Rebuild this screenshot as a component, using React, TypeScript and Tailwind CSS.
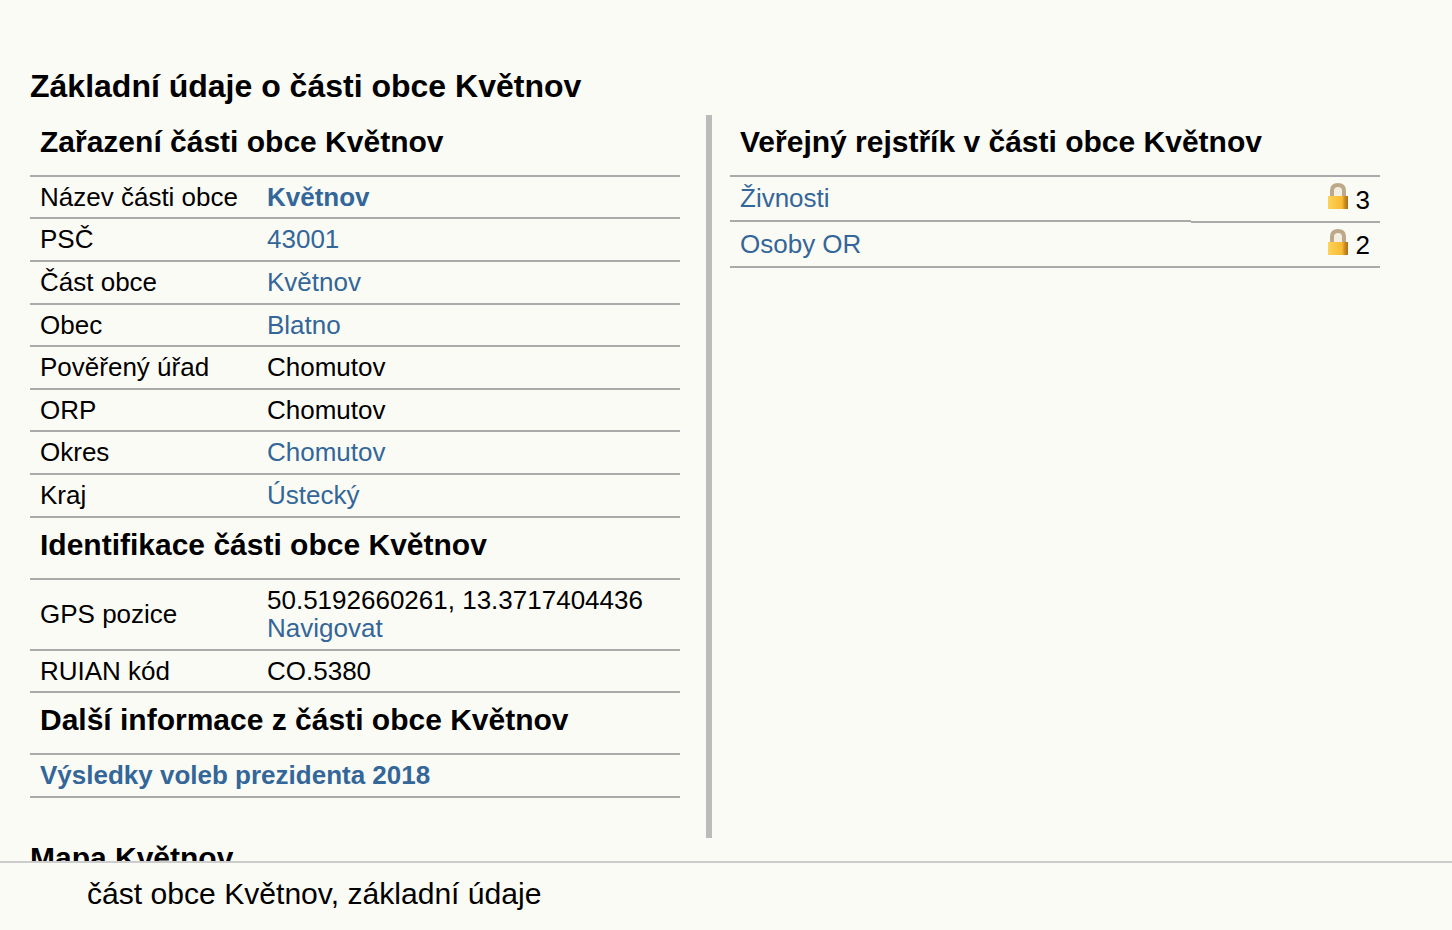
import React from "react";

const LINK = "text-[#336699]";

type Row = { label: string; value: string; link?: boolean; bold?: boolean };

const zarazeni: Row[] = [
  { label: "Název části obce", value: "Květnov", link: true, bold: true },
  { label: "PSČ", value: "43001", link: true },
  { label: "Část obce", value: "Květnov", link: true },
  { label: "Obec", value: "Blatno", link: true },
  { label: "Pověřený úřad", value: "Chomutov" },
  { label: "ORP", value: "Chomutov" },
  { label: "Okres", value: "Chomutov", link: true },
  { label: "Kraj", value: "Ústecký", link: true },
];

function LockIcon() {
  return (
    <svg width="20" height="26" viewBox="0 0 20 26" className="block shrink-0">
      <defs>
        <linearGradient id="lockBody" x1="0" y1="0" x2="1" y2="0">
          <stop offset="0" stopColor="#fdd35a" />
          <stop offset="0.7" stopColor="#f8bb30" />
          <stop offset="0.85" stopColor="#c98a20" />
          <stop offset="1" stopColor="#a96f1a" />
        </linearGradient>
      </defs>
      <path d="M4 14V7.500C4 3 6.500 2 10 2s6 1 6 5.500V14" fill="#f3eee2" stroke="#bda98a" strokeWidth="4" />
      <rect x="0" y="13" width="20" height="13" fill="url(#lockBody)" />
    </svg>
  );
}

function InfoRow({ row, box = "h-[42.625px] pt-[0.4px]" }: { row: Row; box?: string }) {
  return (
    <div className={`${box} flex items-center border-b-2 border-[#aaaaaa] pl-[10px]`}>
      <span className="w-[227px]">{row.label}</span>
      <a className={`${row.link ? LINK : ""} ${row.bold ? "font-bold" : ""}`}>{row.value}</a>
    </div>
  );
}

function SectionHeading({ children, box }: { children: React.ReactNode; box: string }) {
  return (
    <h2 className={`${box} flex items-center border-b-2 border-[#aaaaaa] pl-[10px] text-[30px] font-bold`}>
      {children}
    </h2>
  );
}

function RegistryRow({ name, count, rowHeight, nameHeight }: { name: string; count: number; rowHeight: string; nameHeight: string }) {
  return (
    <div className={`${rowHeight} flex items-start`}>
      <div className={`${nameHeight} flex w-[461px] items-center border-b-2 border-[#aaaaaa] pl-[10px]`}>
        <a className={LINK}>{name}</a>
      </div>
      <div className={`${rowHeight} flex flex-1 items-center justify-end gap-2 border-b-2 border-[#aaaaaa] pr-[10px]`}>
        <span className="-mt-[5px]">
          <LockIcon />
        </span>
        <span className="pt-[3px]">{count}</span>
      </div>
    </div>
  );
}

export default function App() {
  return (
    <div className="h-[930px] overflow-hidden bg-[#fbfbf6] font-['Liberation_Sans',Arial,sans-serif] text-[26px] text-black">
      <div className="pl-[30px] pt-[66px]">
        <h1 className="h-[49px] text-[32px] font-bold leading-[40px]">Základní údaje o části obce Květnov</h1>
        <div className="flex items-start">
          <div className="box-content h-[723px] w-[650px] border-r-[6px] border-[#bbbbbb] pr-[26px]">
            <SectionHeading box="h-[61.7px] pb-[7px]">Zařazení části obce Květnov</SectionHeading>
            {zarazeni.map((row) => (
              <InfoRow key={row.label} row={row} />
            ))}
            <SectionHeading box="h-[62px] pb-[6px]">Identifikace části obce Květnov</SectionHeading>
            <div className="flex h-[71px] items-center border-b-2 border-[#aaaaaa] pl-[10px] leading-[28px]">
              <span className="w-[227px]">GPS pozice</span>
              <div>
                <div>50.5192660261, 13.3717404436</div>
                <a className={LINK}>Navigovat</a>
              </div>
            </div>
            <InfoRow row={{ label: "RUIAN kód", value: "CO.5380" }} box="h-[42px] pt-[1px]" />
            <SectionHeading box="h-[62px] pb-[6px]">Další informace z části obce Květnov</SectionHeading>
            <div className="flex h-[43px] items-center border-b-2 border-[#aaaaaa] pl-[10px]">
              <a className={`${LINK} font-bold`}>Výsledky voleb prezidenta 2018</a>
            </div>
            <h2 className="mt-[43px] text-[30px] font-bold leading-[34px]">Mapa Květnov</h2>
          </div>
          <div className="ml-[18px] w-[650px]">
            <SectionHeading box="h-[61.7px] pb-[7px]">Veřejný rejstřík v části obce Květnov</SectionHeading>
            <RegistryRow name="Živnosti" count={3} rowHeight="h-[46px]" nameHeight="h-[45.3px]" />
            <RegistryRow name="Osoby OR" count={2} rowHeight="h-[45.5px]" nameHeight="h-[45.5px]" />
          </div>
        </div>
      </div>
      <div className="fixed bottom-0 left-0 right-0 h-[69px] border-t-2 border-[#cccccc] bg-[#fbfbf6] pl-[87px] pt-[14px] text-[30.1px] leading-[34px]">
        část obce Květnov, základní údaje
      </div>
    </div>
  );
}
